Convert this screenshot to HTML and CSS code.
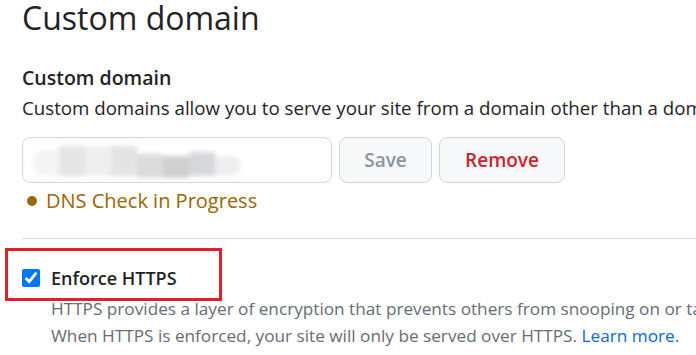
FILE: index.html
```html
<!DOCTYPE html>
<html lang="en">
<head>
  <meta charset="UTF-8" />
  <title>Custom domain</title>
  <link rel="stylesheet" href="styles.css">
</head>
<body>
  <div class="page">
    <h2 class="subhead">Custom domain</h2>

    <div class="group">
      <h3 class="group-title">Custom domain</h3>
      <p class="note">Custom domains allow you to serve your site from a domain other than a domain.github.io.</p>

      <form class="domain-form">
        <div class="input">
          <!-- blurred domain name -->
          <div class="smudge">
            <span class="px p1"></span><span class="px p2"></span><span class="px p3"></span><span class="px p4"></span>
            <span class="px p5"></span><span class="px p6"></span><span class="px p7"></span><span class="px p8"></span>
          </div>
        </div>
        <button type="button" class="btn btn-save" disabled>Save</button>
        <button type="button" class="btn btn-remove">Remove</button>
      </form>

      <div class="dns-status"><span class="dot"></span>DNS Check in Progress</div>
    </div>

    <div class="divider"></div>

    <div class="https">
      <label class="check-row">
        <input type="checkbox" checked>
        <span>Enforce HTTPS</span>
      </label>
      <p class="https-note">HTTPS provides a layer of encryption that prevents others from snooping on or tampering with traffic to your site.<br>
        When HTTPS is enforced, your site will only be served over HTTPS. <a href="#">Learn more</a>.</p>
      <div class="highlight-box"></div>
    </div>
  </div>
</body>
</html>
```

FILE: styles.css
```css
html, body {
  margin: 0; padding: 0; overflow: hidden;
  background: #fff; color: #1f2328;
  font-family: 'Open Sans', 'Noto Sans', sans-serif;
}
.page {
  padding-left: 22px;
  white-space: nowrap;
}
.subhead {
  margin: 0;
  font-size: 32px; font-weight: 400; line-height: 36px;
  height: 38px;
}
.group { margin-top: 26px; }
.group-title {
  margin: 0; font-size: 19.5px; font-weight: 600; line-height: 27px;
}
.note {
  margin: 3px 0 0; font-size: 18.7px; line-height: 27px; color: #1f2328;
}
.domain-form {
  display: flex; gap: 7px; margin-top: 16px;
}
.input {
  width: 308px; height: 44px;
  border: 1px solid #d0d7de; border-radius: 8px;
  position: relative; overflow: hidden;
}
.smudge {
  position: absolute; left: 10px; top: 8px;
  display: flex; filter: blur(2px);
}
.px { display: block; width: 26px; height: 30px; }
.p1 { background: #f4f4f4; height: 26px; margin-top: 4px; border-radius: 12px 0 0 12px; }
.p2 { background: #e6e6e6; }
.p3 { background: #efefef; }
.p4 { background: #e4e4e4; }
.p5 { background: #dcdcdc; margin-top: 8px; height: 24px; }
.p6 { background: #d0d0d0; margin-top: 10px; height: 22px; }
.p7 { background: #d6d8dc; margin-top: 6px; height: 24px; }
.p8 { background: #eeeeee; margin-top: 10px; height: 20px; border-radius: 0 12px 12px 0; }
.btn {
  height: 46px; padding: 0;
  background: #f6f8fa; border: 1px solid #d0d7de; border-radius: 8px;
  font-family: inherit; font-size: 19px; font-weight: 600;
}
.btn-save { color: #8c959f; width: 93px; }
.btn-remove { color: #cf222e; width: 126px; }
.dns-status {
  margin-top: 4px; font-size: 20px; line-height: 28px; color: #9a6700;
  display: flex; align-items: center;
}
.dot {
  width: 10px; height: 10px; border-radius: 50%; background: #9a6700;
  margin: 0 9px 0 5px;
}
.divider {
  height: 1px; background: #d8dee4; margin-top: 23px;
}
.https { position: relative; padding-top: 29px; }
.check-row {
  display: flex; align-items: center; gap: 11px;
  font-size: 18px; font-weight: 600; line-height: 20px;
}
.check-row input {
  width: 18px; height: 18px; margin: 0;
}
.https-note {
  margin: 7px 0 0 29px; font-size: 17.2px; line-height: 27px; color: #656d76;
}
.https-note a { color: #0969da; text-decoration: none; }
.highlight-box {
  position: absolute; left: -17px; top: 9px;
  width: 211px; height: 47px;
  border: 3px solid #e0202a;
}
```
